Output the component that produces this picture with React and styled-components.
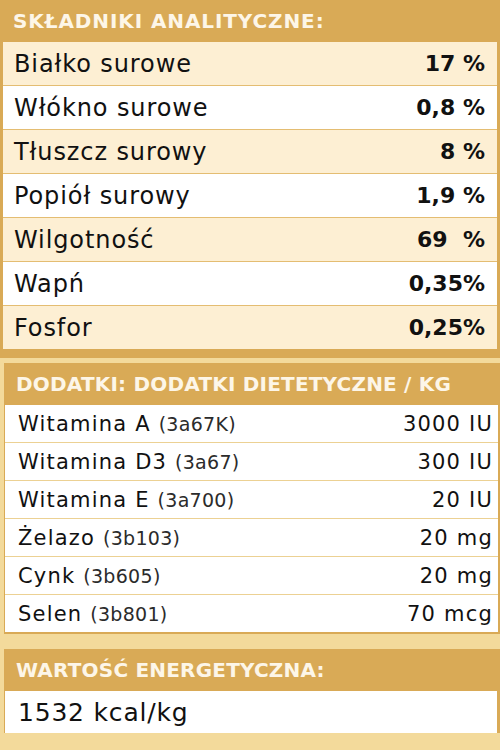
import React from 'react'
import styled, { createGlobalStyle } from 'styled-components'

const analytical = [
    ['Białko surowe', '17 %'],
    ['Włókno surowe', '0,8 %'],
    ['Tłuszcz surowy', '8 %'],
    ['Popiół surowy', '1,9 %'],
    ['Wilgotność', '69\u00a0\u00a0%'],
    ['Wapń', '0,35%'],
    ['Fosfor', '0,25%'],
]

const additives = [
    ['Witamina A', '(3a67K)', '3000 IU'],
    ['Witamina D3', '(3a67)', '300 IU'],
    ['Witamina E', '(3a700)', '20 IU'],
    ['Żelazo', '(3b103)', '20 mg'],
    ['Cynk', '(3b605)', '20 mg'],
    ['Selen', '(3b801)', '70 mcg'],
]

function App() {
  return (
    <Page>
        <GlobalStyle />
        <MainSection>
            <Header wide>Składniki analityczne:</Header>
            {analytical.map(([label, value], index) => (
                <BigRow key={label} cream={index % 2 === 0}>
                    <span>{label}</span>
                    <BigValue>{value}</BigValue>
                </BigRow>
            ))}
        </MainSection>
        <Section>
            <Header>Dodatki: dodatki dietetyczne / kg</Header>
            {additives.map(([label, code, value]) => (
                <SmallRow key={label}>
                    <span>{label} <Code>{code}</Code></span>
                    <span>{value}</span>
                </SmallRow>
            ))}
        </Section>
        <EnergySection>
            <Header>Wartość energetyczna:</Header>
            <EnergyRow>1532 kcal/kg</EnergyRow>
        </EnergySection>
    </Page>
  )
}

export default App

const GlobalStyle = createGlobalStyle`
    body {
        margin: 0;
        background: #f3da9b;
        font-family: "DejaVu Sans", Inter, sans-serif;
        color: #111;
    }
`

const Page = styled.div`
    width: 500px;
    height: 750px;
    background: #f3da9b;
    overflow: hidden;
`

const MainSection = styled.div`
    background: #d9aa56;
    padding: 0 3px 9px 3px;
`

const Section = styled.div`
    background: #d9aa56;
    margin: 5px 0 0 4px;
    padding: 0 2px 2px 1px;
`

const EnergySection = styled(Section)`
    margin-top: 15px;
    padding: 0 3px 0 1px;
`

const Header = styled.div`
    height: 42px;
    display: flex;
    align-items: center;
    padding-left: ${props => props.wide ? '10px' : '11px'};
    color: #fdf6e8;
    font-size: 20px;
    font-weight: 700;
    text-transform: uppercase;
    letter-spacing: ${props => props.wide ? '0.9px' : '0.2px'};
`

const BigRow = styled.div`
    height: 43px;
    display: flex;
    align-items: center;
    justify-content: space-between;
    padding: 0 12px 0 11px;
    background: ${props => props.cream ? '#fdefd3' : '#ffffff'};
    border-bottom: 1px solid #e4bd72;
    font-size: 24px;
    letter-spacing: 0.9px;

    &:last-child {
        border-bottom: none;
    }
`

const BigValue = styled.span`
    font-weight: 700;
    font-size: 22px;
    letter-spacing: 0;
`

const SmallRow = styled.div`
    height: 37px;
    display: flex;
    align-items: center;
    justify-content: space-between;
    padding: 0 5px 0 13px;
    background: #ffffff;
    border-bottom: 1px solid #ecd193;
    font-size: 21px;
    letter-spacing: 1.2px;

    &:last-child {
        border-bottom: none;
    }
`

const Code = styled.span`
    font-weight: 400;
    font-size: 19px;
    letter-spacing: 0.3px;
    color: #2b2b2b;
`

const EnergyRow = styled.div`
    height: 42px;
    display: flex;
    align-items: center;
    padding-left: 13px;
    background: #ffffff;
    font-size: 25px;
    letter-spacing: 0.8px;
`
